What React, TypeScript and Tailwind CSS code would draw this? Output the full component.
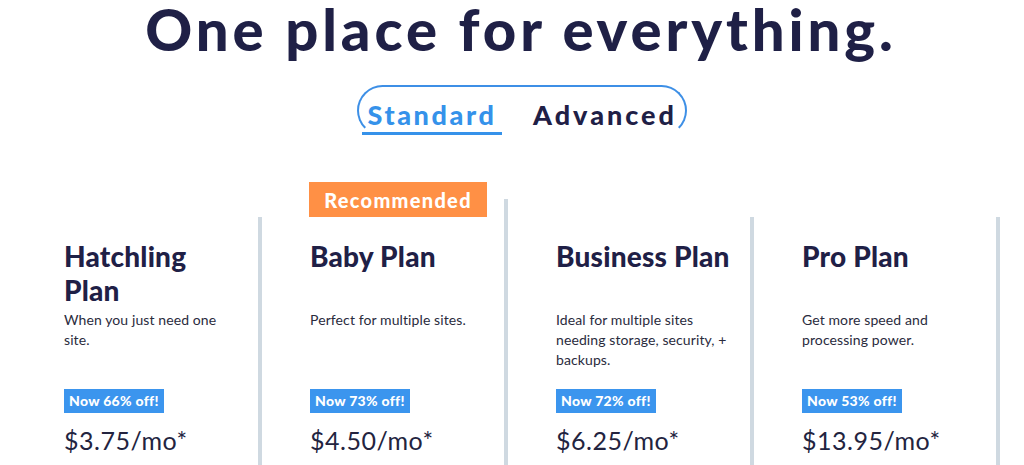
const plans = [
  { name: 'Hatchling Plan', desc: 'When you just need one site.', off: 66, price: '$3.75' },
  { name: 'Baby Plan', desc: 'Perfect for multiple sites.', off: 73, price: '$4.50', recommended: true },
  { name: 'Business Plan', desc: 'Ideal for multiple sites needing storage, security, + backups.', off: 72, price: '$6.25' },
  { name: 'Pro Plan', desc: 'Get more speed and processing power.', off: 53, price: '$13.95' },
]

export default function App() {
  return (
    <div className="w-[1024px] h-[465px] overflow-hidden bg-white font-['Lato',sans-serif] text-[#1f2046]">
      {/* heading */}
      <h1 className="text-center text-[58px] leading-[58px] font-black tracking-[3.9px] pl-[18px]">
        One place for everything.
      </h1>

      {/* tabs */}
      <div className="flex justify-center mt-[27px] pl-[20px]">
        <div className="w-[330px] h-[51px] rounded-full border-2 border-[#3d8fe6] border-b-transparent flex items-end pl-[3px] gap-[31px]">
          <button className="relative h-[48px] w-[140px] text-[27px] font-black tracking-[2.6px] text-[#3592ea] leading-[58px] text-center">
            Standard
            <span className="absolute left-0 right-0 bottom-[-1px] h-[3px] bg-[#3592ea]" />
          </button>
          <button className="h-[48px] text-[27px] font-black tracking-[3px] text-[#1f2046] leading-[58px]">
            Advanced
          </button>
        </div>
      </div>

      {/* plans */}
      <div className="flex items-start pl-[16px] mt-[81px]">
        {plans.map(p => (
          <div
            key={p.name}
            className={
              p.recommended
                ? 'relative w-[246px] shrink-0 border-r-4 border-[#cfd9e1] pl-[48px] pr-[16px] -mt-[18px] pt-[40px] h-[290px]'
                : 'relative w-[246px] shrink-0 border-r-4 border-[#cfd9e1] pl-[48px] pr-[16px] pt-[22px] h-[272px]'
            }
          >
            {p.recommended && (
              <div className="absolute top-[-17px] left-[47px] w-[178px] h-[35px] bg-[#ff9045] text-white text-[20px] font-black tracking-[1.3px] flex items-center justify-center">
                Recommended
              </div>
            )}
            <h2 className="text-[28px] leading-[34px] font-black h-[68px] tracking-[0.2px]">{p.name}</h2>
            <p className="mt-[3px] h-[60px] text-[14px] leading-[20px] tracking-[0.1px] text-[#2a2b3d]">{p.desc}</p>
            <div className="mt-[19px] inline-block bg-[#3b95ee] text-white text-[14px] font-black px-[5px] tracking-[0.3px] leading-[24px]">
              Now {p.off}% off!
            </div>
            <div className="mt-[11px] text-[25px] leading-[32px] text-[#23243f] tracking-[0.5px]">
              {p.price}/mo*
            </div>
          </div>
        ))}
        <div className="w-[30px]" />
      </div>
    </div>
  )
}
